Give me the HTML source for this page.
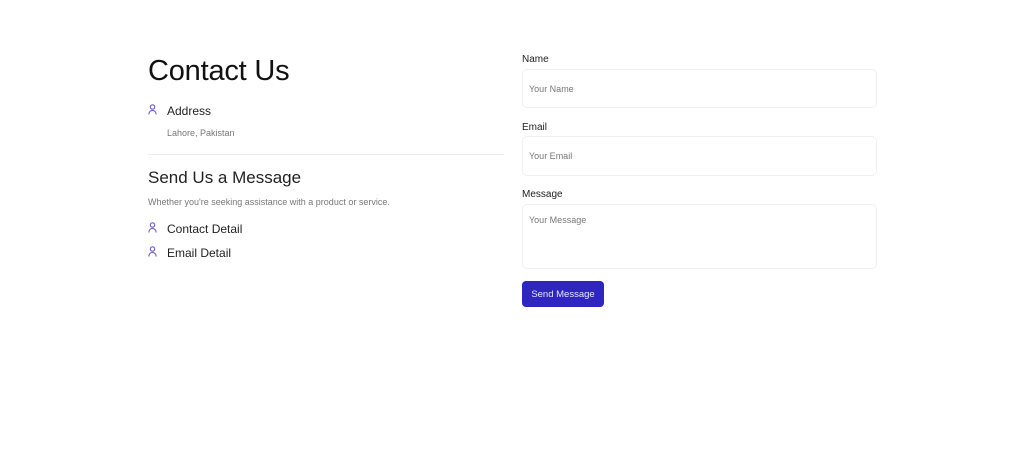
<!DOCTYPE html>
<html><head><meta charset="utf-8"><style>
*{box-sizing:border-box;margin:0;padding:0}
body{width:1024px;height:467px;background:#fff;font-family:"Liberation Sans",sans-serif;color:#1a1a1a;position:relative;overflow:hidden}
.a{position:absolute}
h1{position:absolute;left:148px;top:55px;font-size:29px;font-weight:400;letter-spacing:-0.2px;color:#111}
.row{position:absolute;left:148px;display:flex;align-items:center;font-size:12px;color:#222}
.row svg{margin-right:10px;position:relative;top:-2px}
.lbl{position:absolute;left:522px;font-size:10px;color:#222}
.in{position:absolute;left:522px;width:355px;border:1px solid #f0f0f3;border-radius:5px;font-size:9px;color:#777;padding-left:6px}
</style></head><body>
<h1>Contact Us</h1>
<div class="row" style="top:104px"><svg width="9" height="11" viewBox="0 0 9 11"><circle cx="4.5" cy="3" r="2.2" fill="none" stroke="#6a5acd" stroke-width="1.1"/><path d="M0.8 10.5 Q1.2 6.5 4.5 6.5 Q7.8 6.5 8.2 10.5" fill="none" stroke="#6a5acd" stroke-width="1.1"/></svg>Address</div>
<div class="a" style="left:167px;top:128px;font-size:9px;color:#777">Lahore, Pakistan</div>
<div class="a" style="left:148px;top:154px;width:356px;height:1px;background:#ececec"></div>
<div class="a" style="left:148px;top:168px;font-size:17px;color:#222">Send Us a Message</div>
<div class="a" style="left:148px;top:197px;font-size:9px;color:#777">Whether you're seeking assistance with a product or service.</div>
<div class="row" style="top:222px"><svg width="9" height="11" viewBox="0 0 9 11"><circle cx="4.5" cy="3" r="2.2" fill="none" stroke="#6a5acd" stroke-width="1.1"/><path d="M0.8 10.5 Q1.2 6.5 4.5 6.5 Q7.8 6.5 8.2 10.5" fill="none" stroke="#6a5acd" stroke-width="1.1"/></svg>Contact Detail</div>
<div class="row" style="top:246px"><svg width="9" height="11" viewBox="0 0 9 11"><circle cx="4.5" cy="3" r="2.2" fill="none" stroke="#6a5acd" stroke-width="1.1"/><path d="M0.8 10.5 Q1.2 6.5 4.5 6.5 Q7.8 6.5 8.2 10.5" fill="none" stroke="#6a5acd" stroke-width="1.1"/></svg>Email Detail</div>

<div class="lbl" style="top:54px">Name</div>
<div class="in" style="top:69px;height:39px;line-height:38px">Your Name</div>
<div class="lbl" style="top:122px">Email</div>
<div class="in" style="top:136px;height:40px;line-height:39px">Your Email</div>
<div class="lbl" style="top:189px">Message</div>
<div class="in" style="top:204px;height:65px;padding-top:10px">Your Message</div>
<div class="a" style="left:522px;top:281px;width:82px;height:26px;background:#2f25c0;border-radius:4px;color:#e8e6ff;font-size:9.5px;text-align:center;line-height:27px">Send Message</div>
</body></html>
